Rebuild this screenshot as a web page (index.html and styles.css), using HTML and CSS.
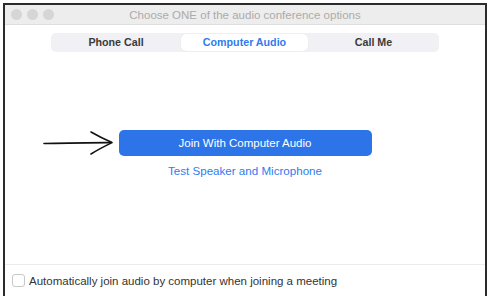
FILE: index.html
```html
<!DOCTYPE html>
<html>
<head>
<meta charset="utf-8">
<link rel="stylesheet" href="styles.css">
</head>
<body>
<div class="window">
  <div class="titlebar">
    <div class="lights"><span class="light"></span><span class="light"></span><span class="light"></span></div>
    <div class="title">Choose ONE of the audio conference options</div>
  </div>
  <div class="content">
    <div class="segmented">
      <div class="seg">Phone Call</div>
      <div class="seg active">Computer Audio</div>
      <div class="seg">Call Me</div>
    </div>
    <div class="actions">
      <svg class="arrow" width="72" height="26" viewBox="0 0 72 26">
        <path d="M1 13.5 C 20 13, 45 12.8, 68 12.6" fill="none" stroke="#111" stroke-width="1.6" stroke-linecap="round"/>
        <path d="M48 2 C 55 6, 62 9.5, 69 12.6 C 62 16, 55 19.5, 48 24" fill="none" stroke="#111" stroke-width="1.6" stroke-linecap="round" stroke-linejoin="round"/>
      </svg>
      <button class="join">Join With Computer Audio</button>
      <div class="link">Test Speaker and Microphone</div>
    </div>
  </div>
  <div class="footer">
    <span class="checkbox"></span>
    <span class="label">Automatically join audio by computer when joining a meeting</span>
  </div>
</div>
</body>
</html>
```
FILE: styles.css
```css
html, body {
  margin: 0;
  padding: 0;
  background: #fff;
}
body {
  font-family: "Liberation Sans", Arial, sans-serif;
}
.window {
  margin: 3px 4px 0 3px;
  height: 293px;
  border: 2px solid #2b2b2b;
  border-bottom: none;
  display: flex;
  flex-direction: column;
  box-sizing: border-box;
}
.titlebar {
  height: 20px;
  background: #ededed;
  border-bottom: 1px solid #dedede;
  position: relative;
  display: flex;
  align-items: center;
  justify-content: center;
  box-sizing: border-box;
  flex-shrink: 0;
}
.lights {
  position: absolute;
  left: 6px;
  top: 4px;
  display: flex;
  gap: 5px;
}
.light {
  width: 11px;
  height: 11px;
  border-radius: 50%;
  background: #d6d6d6;
}
.title {
  font-size: 11.5px;
  color: #ababab;
}
.content {
  flex: 1;
  display: flex;
  flex-direction: column;
  align-items: center;
  padding-top: 8px;
}
.segmented {
  width: 388px;
  height: 19px;
  background: #f0f0f5;
  border-radius: 5px;
  display: grid;
  grid-template-columns: 130px 127px 131px;
  align-items: center;
  box-sizing: border-box;
}
.seg {
  text-align: center;
  font-size: 10.7px;
  font-weight: bold;
  color: #3a3a3a;
  height: 17px;
  line-height: 17px;
}
.seg.active {
  background: #fff;
  color: #2f7bf0;
  border-radius: 5px;
  box-shadow: 0 0 1px rgba(0,0,0,0.12);
}
.actions {
  margin-top: 78px;
  display: flex;
  flex-direction: column;
  align-items: center;
  position: relative;
}
.arrow {
  position: absolute;
  left: -76px;
  top: 0px;
}
.join {
  width: 253px;
  height: 26px;
  border: none;
  border-radius: 5px;
  background: #2d74e8;
  color: #fff;
  font-family: "Liberation Sans", Arial, sans-serif;
  font-size: 11.5px;
  padding: 0;
}
.link {
  margin-top: 8px;
  font-size: 11.6px;
  color: #2f7bf0;
}
.footer {
  height: 32px;
  border-top: 1px solid #ececf0;
  display: flex;
  align-items: center;
  padding-left: 7px;
  gap: 4px;
  flex-shrink: 0;
  box-sizing: border-box;
}
.checkbox {
  width: 11px;
  height: 11px;
  border: 1px solid #c8c8c8;
  border-radius: 3px;
  background: #fff;
}
.label {
  font-size: 11.5px;
  color: #333;
}
```
